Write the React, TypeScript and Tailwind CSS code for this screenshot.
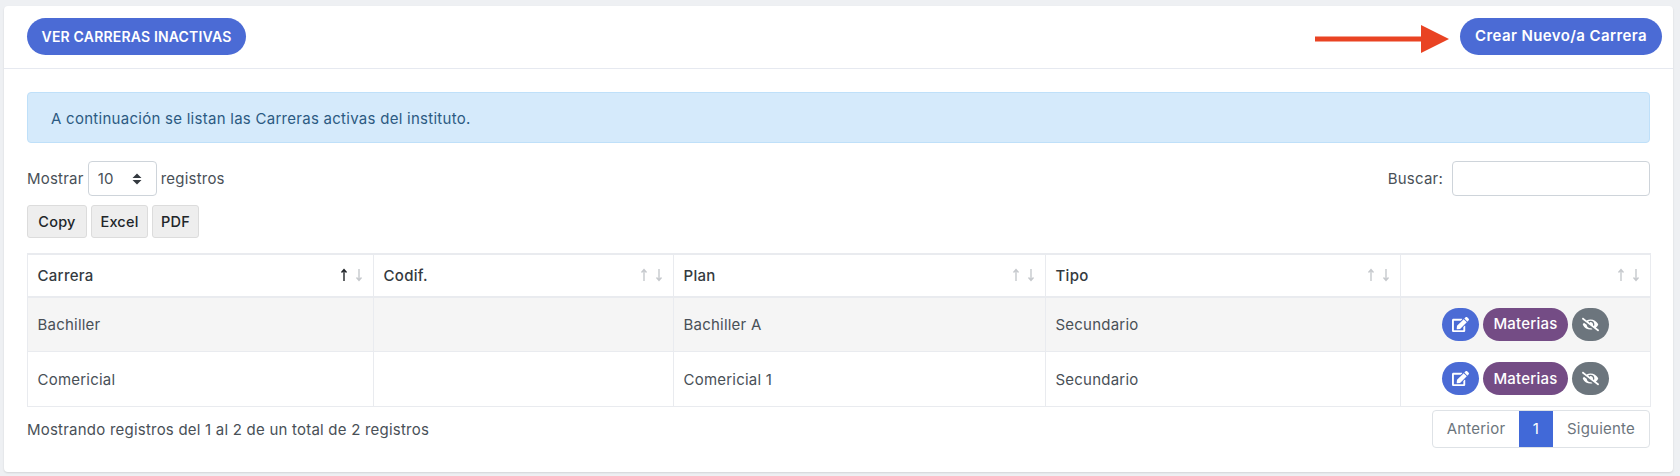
import React from 'react';
import { FaEdit, FaEyeSlash } from 'react-icons/fa';

const rows = [
  { carrera: 'Bachiller', plan: 'Bachiller A', tipo: 'Secundario' },
  { carrera: 'Comericial', plan: 'Comericial 1', tipo: 'Secundario' },
];

const SortArrows = ({ active = false }: { active?: boolean }) => (
  <span className="absolute right-[10px] top-[13px] flex gap-[7px]">
    <svg width="8" height="14" viewBox="0 0 8 14" className={active ? 'text-[#212529]' : 'text-[#c6c9cd]'}>
      <path d="M4 13V2M1.5 4.5L4 1.5l2.5 3" fill="none" stroke="currentColor" strokeWidth="1.4" />
    </svg>
    <svg width="8" height="14" viewBox="0 0 8 14" className="text-[#c6c9cd]">
      <path d="M4 1v11M1.5 9.5L4 12.5l2.5-3" fill="none" stroke="currentColor" strokeWidth="1.4" />
    </svg>
  </span>
);

const HeaderCell = ({ label, active, width }: { label?: string; active?: boolean; width: string }) => (
  <th className={`relative border border-[#e9ebef] px-[9.5px] pt-[2px] text-left align-middle text-[15px] font-medium tracking-[0.3px] text-[#343a40] ${width}`}>
    {label}
    <SortArrows active={active} />
  </th>
);

const App = () => {
  return (
    <div className="h-[476px] overflow-hidden bg-[#eef0f3] pl-[4px] pr-[7px] pt-[6px] font-['Inter',sans-serif] text-[15px] tracking-[0.22px] text-[#495057]">
      <div className="h-[466px] rounded-[4px] bg-white shadow-[0_1px_2px_rgba(0,0,0,0.12)]">
        {/* Top bar */}
        <div className="relative flex h-[63px] items-start justify-between border-b border-[#e6e9f0] pl-[23px] pr-[11px] pt-[12px]">
          <button className="h-[37px] w-[219px] rounded-full bg-[#4b6bd5] text-[14px] font-semibold tracking-[0.18px] text-white">
            VER CARRERAS INACTIVAS
          </button>
          <svg width="134" height="28" viewBox="0 0 134 28" className="absolute left-[1311px] top-[19px]">
            <path d="M0 11.5H106V0L134 14L106 28V16.5H0Z" fill="#e94323" />
          </svg>
          <button className="h-[37px] w-[202px] rounded-full bg-[#4b6bd5] text-[15px] font-semibold tracking-[0.4px] text-white">
            Crear Nuevo/a Carrera
          </button>
        </div>

        <div className="px-[23px] pt-[23px]">
          <div className="flex h-[51px] items-center rounded-[4px] border border-[#bfe0f9] bg-[#d5eafb] pl-[23px] pt-[3px] tracking-[0.27px] text-[#2c5a82]">
            A continuación se listan las Carreras activas del instituto.
          </div>

          {/* Length and search */}
          <div className="mt-[18px] flex h-[35px] items-center justify-between">
            <div className="flex items-center gap-[4px]">
              <span className="pt-[1px]">Mostrar</span>
              <div className="relative">
                <select className="h-[35px] w-[69px] appearance-none rounded-[4px] border border-[#ced4da] bg-white pl-[9px] pt-[1px] text-[#495057]">
                  <option>10</option>
                </select>
                <svg width="10" height="12" viewBox="0 0 10 12" className="absolute right-[15px] top-[12px]">
                  <path d="M5 0.5L9.5 5H0.5ZM5 11.5L0.5 7H9.5Z" fill="#343a40" />
                </svg>
              </div>
              <span className="pt-[1px]">registros</span>
            </div>
            <div className="flex items-center gap-[9px]">
              <span className="pt-[1px]">Buscar:</span>
              <input className="h-[35px] w-[198px] rounded-[4px] border border-[#ced4da] bg-white" />
            </div>
          </div>

          {/* Export */}
          <div className="mt-[9px] flex gap-[4px] text-[14.5px] font-medium text-[#212529]">
            <button className="h-[33px] w-[60px] rounded-[3px] border border-[#dcdcdc] bg-[#eeeeee]">Copy</button>
            <button className="h-[33px] w-[57px] rounded-[3px] border border-[#dcdcdc] bg-[#eeeeee]">Excel</button>
            <button className="h-[33px] w-[47px] rounded-[3px] border border-[#dcdcdc] bg-[#eeeeee]">PDF</button>
          </div>

          <table className="mt-[15px] w-[1623px] table-fixed border-collapse border-t-2 border-[#e9ebef]">
            <thead>
              <tr className="h-[43px] border-b-2 border-[#e9ebef]">
                <HeaderCell label="Carrera" active width="w-[346px]" />
                <HeaderCell label="Codif." width="w-[300px]" />
                <HeaderCell label="Plan" width="w-[372px]" />
                <HeaderCell label="Tipo" width="w-[355px]" />
                <HeaderCell width="w-[250px]" />
              </tr>
            </thead>
            <tbody>
              {rows.map((row, i) => (
                <tr key={row.carrera} className={`h-[54.5px] ${i === 0 ? 'bg-[#f5f5f5]' : 'bg-white'}`}>
                  <td className="border border-[#e9ebef] px-[9.5px] pt-[2px]">{row.carrera}</td>
                  <td className="border border-[#e9ebef] px-[9.5px]"></td>
                  <td className="border border-[#e9ebef] px-[9.5px] pt-[2px]">{row.plan}</td>
                  <td className="border border-[#e9ebef] px-[9.5px] pt-[2px]">{row.tipo}</td>
                  <td className="border border-[#e9ebef]">
                    <div className="flex justify-center gap-[4px]">
                      <button className="flex h-[33px] w-[37px] items-center justify-center rounded-full bg-[#4b6bd5] text-white">
                        <FaEdit size={17} />
                      </button>
                      <button className="h-[33px] w-[85px] rounded-full bg-[#744c85] text-[15px] font-medium text-white">
                        Materias
                      </button>
                      <button className="flex h-[33px] w-[37px] items-center justify-center rounded-full bg-[#6c757d] text-white">
                        <FaEyeSlash size={17} />
                      </button>
                    </div>
                  </td>
                </tr>
              ))}
            </tbody>
          </table>

          {/* Footer */}
          <div className="mt-[3px] flex items-center justify-between">
            <span className="pt-[3px]">Mostrando registros del 1 al 2 de un total de 2 registros</span>
            <div className="flex h-[38px] overflow-hidden rounded-[4px] border border-[#dee2e6] text-[#6c757d]">
              <span className="flex w-[86px] items-center justify-center pt-[1px]">Anterior</span>
              <span className="flex w-[34px] items-center justify-center bg-[#4169d8] pt-[1px] text-white">1</span>
              <span className="flex w-[96px] items-center justify-center pt-[1px]">Siguiente</span>
            </div>
          </div>
        </div>
      </div>
    </div>
  );
};

export default App;
